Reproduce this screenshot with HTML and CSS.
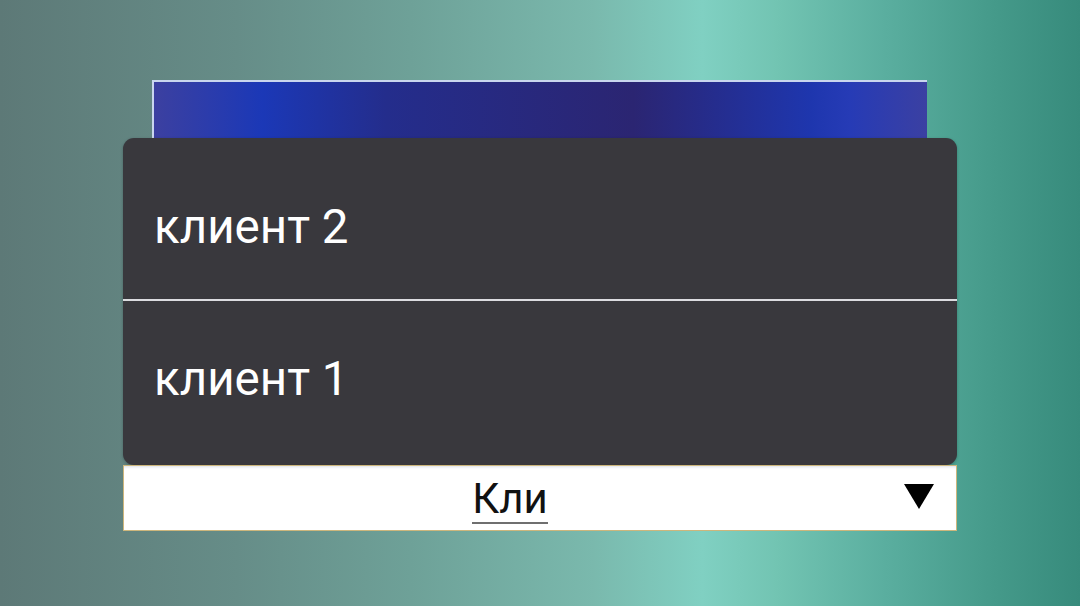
FILE: index.html
```html
<!DOCTYPE html>
<html lang="ru">
<head>
<meta charset="utf-8">
<title>Клиенты</title>
<link rel="stylesheet" href="styles.css">
</head>
<body>
<div class="stage">
  <div class="banner"></div>
  <div class="menu">
    <div class="item item-first">клиент 2</div>
    <div class="divider"></div>
    <div class="item item-second">клиент 1</div>
  </div>
  <div class="combo">
    <div class="combo-text"><span class="typed">Кли</span></div>
    <div class="combo-arrow"><svg width="30" height="25" viewBox="0 0 30 25"><polygon points="0,0 30,0 15,25" fill="#000"/></svg></div>
  </div>
</div>
</body>
</html>
```
FILE: styles.css
```css
html, body {
  margin: 0;
  padding: 0;
  width: 1080px;
  height: 606px;
  overflow: hidden;
}
body {
  font-family: Roboto, "Liberation Sans", sans-serif;
  background: linear-gradient(90deg, #5d7977 0%, #668d88 22%, #6ea198 38%, #7ab9ad 55%, #80d0c2 65%, #72c4b2 72%, #5aae9f 82%, #459a8a 92%, #378b7c 100%);
}
.stage {
  position: relative;
  width: 1080px;
  height: 606px;
  display: flex;
  flex-direction: column;
  align-items: center;
  padding-top: 80px;
  box-sizing: border-box;
}
.banner {
  width: 775px;
  height: 58px;
  margin-left: -2px;
  border-top: 2px solid #c9d6ee;
  border-left: 2px solid #c9d6ee;
  box-sizing: border-box;
  background: linear-gradient(90deg, #3c40a0 0%, #1b38b7 14%, #242d8c 30%, #2b2572 62%, #1e36ae 85%, #263bb6 90%, #3b40a2 100%);
}
.menu {
  width: 834px;
  height: 327px;
  background: #39383d;
  border-radius: 11px;
  display: flex;
  flex-direction: column;
  color: #ffffff;
  box-shadow: 0 1px 3px rgba(0,0,0,0.25);
}
.item {
  display: flex;
  align-items: center;
  padding-left: 31px;
  font-size: 47.5px;
}
.item-first {
  height: 161px;
  padding-top: 16px;
  box-sizing: border-box;
}
.item-second {
  height: 164px;
  padding-bottom: 8px;
  box-sizing: border-box;
}
.divider {
  height: 2px;
  background: #dcdce0;
}
.combo {
  width: 834px;
  height: 66px;
  box-sizing: border-box;
  border: 1px solid #cdb67c;
  background: #ffffff;
  box-shadow: inset 0 3px 3px -2px rgba(150,160,190,0.35);
  display: flex;
  align-items: center;
}
.combo-text {
  flex: 1;
  text-align: center;
  font-size: 42px;
  color: #111111;
  padding-top: 1px;
}
.typed {
  border-bottom: 2px solid #6f6f6f;
  line-height: 46px;
  display: inline-block;
}
.combo-arrow {
  width: 60px;
  display: flex;
  align-items: center;
  justify-content: flex-start;
  padding-left: 8px;
  box-sizing: border-box;
  margin-top: -3px;
}
.combo-arrow svg {
  display: block;
}
```
